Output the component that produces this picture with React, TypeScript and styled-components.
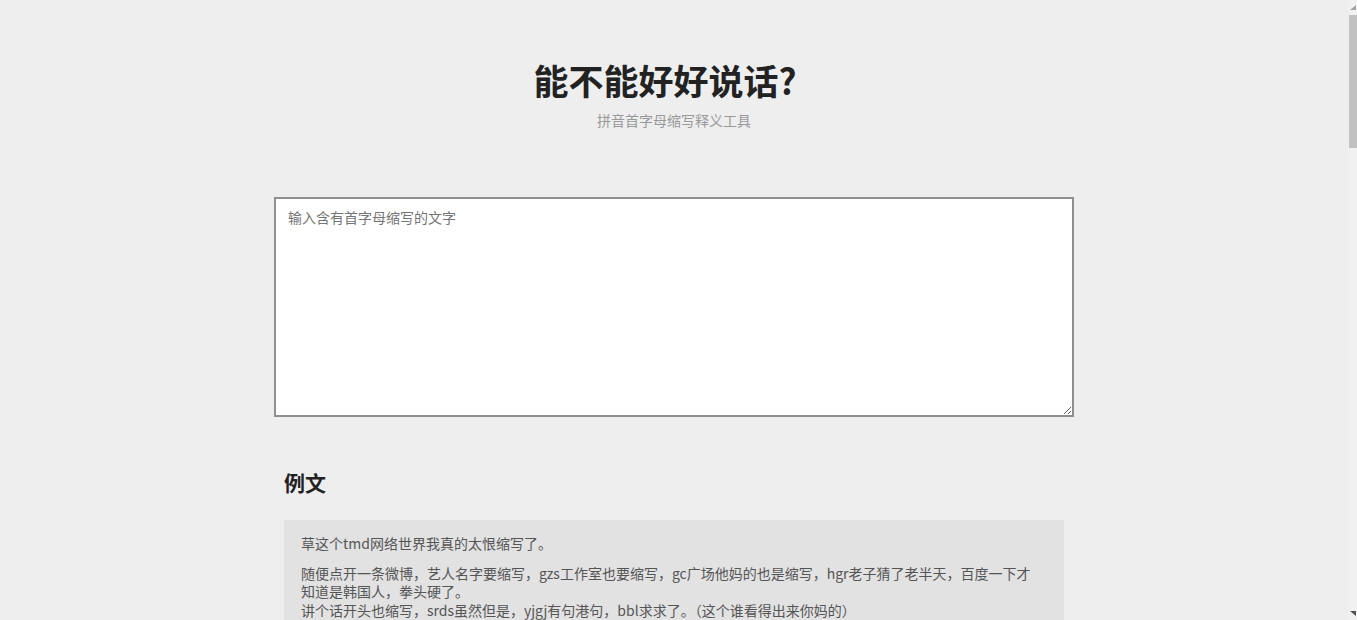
import React from "react";
import styled, { createGlobalStyle } from "styled-components";

const Global = createGlobalStyle`
  html, body {
    margin: 0;
    padding: 0;
    background: #eeeeee;
    font-family: "Noto Sans", "Noto Sans CJK SC", sans-serif;
    color: #222;
  }
  html {
    scrollbar-width: none;
  }
  ::-webkit-scrollbar {
    width: 0;
    height: 0;
    display: none;
  }
`;

const Page = styled.div`
  min-height: 3280px;
  padding-right: 9px;
  display: flex;
  flex-direction: column;
  align-items: center;
`;

const Header = styled.header`
  display: flex;
  flex-direction: column;
  align-items: center;
  padding-top: 58px;
`;

const Title = styled.h1`
  margin: 0;
  padding-right: 18px;
  font-size: 35px;
  line-height: 44px;
  font-weight: 700;
  color: #222;
  font-family: "Noto Sans CJK SC", "Noto Sans", sans-serif;
`;

const Subtitle = styled.p`
  margin: 8px 0 0;
  font-size: 14px;
  line-height: 20px;
  color: #999;
  font-family: "Noto Sans CJK SC", sans-serif;
`;

const Main = styled.main`
  width: 800px;
  margin-top: 67px;
  display: flex;
  flex-direction: column;
`;

const Input = styled.textarea`
  box-sizing: border-box;
  width: 800px;
  height: 220px;
  border: 2px solid #8f8f8f;
  background: #fff;
  padding: 8px 12px;
  font-size: 14px;
  line-height: 20px;
  color: #333;
  font-family: "Noto Sans CJK SC", sans-serif;
  outline: none;
  resize: vertical;
  display: block;
  &::placeholder {
    color: #757575;
  }
`;

const Section = styled.section`
  padding: 47px 10px 0;
`;

const SectionTitle = styled.h2`
  margin: 0;
  font-size: 21px;
  line-height: 36px;
  font-weight: 700;
  color: #222;
  font-family: "Noto Sans CJK SC", sans-serif;
`;

const ExampleBox = styled.div`
  margin-top: 20px;
  background: #e2e2e2;
  padding: 14px 30px 14px 17px;
`;

const Para = styled.p`
  margin: 0 0 11px;
  font-size: 14px;
  line-height: 18.5px;
  color: #555;
  font-family: "Noto Sans CJK SC", sans-serif;
`;

/* drawing of the window's scrollbar, laid over the right edge */
const ScrollBar = styled.div`
  position: fixed;
  top: 0;
  right: 0;
  bottom: 0;
  width: 9px;
  background: #f1f1f1;
`;

const Thumb = styled.div`
  position: absolute;
  top: 15px;
  right: 0;
  width: 8px;
  height: 133px;
  background: #c1c1c1;
`;

const Arrow = styled.svg<{ $bottom?: boolean }>`
  position: absolute;
  right: 1px;
  width: 6px;
  height: 5px;
  ${(p) => (p.$bottom ? "bottom: 4px;" : "top: 5px;")}
`;

export default function App() {
  return (
    <>
      <Global />
      <Page>
        <Header>
          <Title>能不能好好说话?</Title>
          <Subtitle>拼音首字母缩写释义工具</Subtitle>
        </Header>
        <Main>
          <Input placeholder="输入含有首字母缩写的文字" />
          <Section>
            <SectionTitle>例文</SectionTitle>
            <ExampleBox>
              <Para>草这个tmd网络世界我真的太恨缩写了。</Para>
              <Para>
                随便点开一条微博，艺人名字要缩写，gzs工作室也要缩写，gc广场他妈的也是缩写，hgr老子猜了老半天，百度一下才知道是韩国人，拳头硬了。
                <br />
                讲个话开头也缩写，srds虽然但是，yjgj有句港句，bbl求求了。（这个谁看得出来你妈的）
              </Para>
            </ExampleBox>
          </Section>
        </Main>
      </Page>
      <ScrollBar>
        <Arrow viewBox="0 0 6 5">
          <polygon points="6,0 6,5 0,5" fill="#a3a3a3" />
        </Arrow>
        <Thumb />
        <Arrow $bottom viewBox="0 0 6 5">
          <polygon points="0,0 6,0 6,5" fill="#505050" />
        </Arrow>
      </ScrollBar>
    </>
  );
}
